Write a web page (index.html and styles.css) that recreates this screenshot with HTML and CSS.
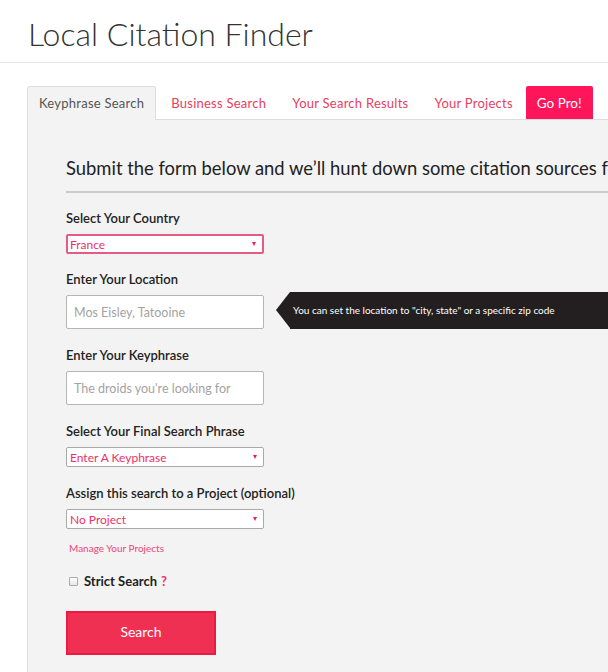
FILE: index.html
```html
<!DOCTYPE html>
<html lang="en">
<head>
<meta charset="utf-8">
<title>Local Citation Finder</title>
<link rel="stylesheet" href="styles.css">
</head>
<body>
<header class="top">
  <h1 class="title">Local Citation Finder</h1>
</header>
<nav class="tabs">
  <a class="tab tab-active">Keyphrase Search</a>
  <a class="tab tab-second">Business Search</a>
  <a class="tab">Your Search Results</a>
  <a class="tab">Your Projects</a>
  <a class="tab tab-pro">Go Pro!</a>
  <span class="tabs-fill"></span>
</nav>
<section class="panel">
  <h2 class="intro">Submit the form below and we’ll hunt down some citation sources for you</h2>
  <form class="form">
    <label class="label first">Select Your Country</label>
    <div class="select select-focus"><span>France</span><span class="caret"></span></div>

    <label class="label">Enter Your Location</label>
    <div class="row">
      <div class="input"><span class="ph">Mos Eisley, Tatooine</span></div>
      <div class="tip">You can set the location to "city, state" or a specific zip code</div>
    </div>

    <label class="label gap17">Enter Your Keyphrase</label>
    <div class="input"><span class="ph">The droids you're looking for</span></div>

    <label class="label gap17">Select Your Final Search Phrase</label>
    <div class="select"><span>Enter A Keyphrase</span><span class="caret"></span></div>

    <label class="label gap17">Assign this search to a Project (optional)</label>
    <div class="select"><span>No Project</span><span class="caret"></span></div>

    <a class="manage">Manage Your Projects</a>

    <div class="check-row">
      <span class="checkbox"></span>
      <span class="check-label">Strict Search</span>
      <span class="help">?</span>
    </div>

    <button type="button" class="btn">Search</button>
  </form>
</section>
</body>
</html>
```

FILE: styles.css
```css
* { box-sizing: border-box; }
html, body { margin: 0; padding: 0; }
body {
  background: #fff;
  font-family: Lato, "Open Sans", sans-serif;
  color: #222;
  width: 608px;
  height: 672px;
  overflow: hidden;
}
.top {
  height: 63px;
  border-bottom: 1px solid #e6e6e6;
  padding-left: 28px;
}
.title {
  margin: 0;
  padding-top: 14px;
  font-size: 32px;
  line-height: 40px;
  font-weight: 300;
  color: #333;
}
.tabs {
  display: flex;
  align-items: stretch;
  margin-top: 23px;
  padding-left: 27px;
  height: 34px;
}
.tab {
  display: flex;
  align-items: center;
  padding: 0 13px;
  font-size: 13px;
  letter-spacing: 0.25px;
  color: #e8405e;
  border-bottom: 1px solid #ddd;
  white-space: nowrap;
}
.tab-second { padding-left: 15px; }
.tab-active {
  background: #f3f3f3;
  color: #555;
  border: 1px solid #ddd;
  border-bottom: 1px solid #f3f3f3;
  border-radius: 3px 3px 0 0;
  padding: 0 11px 0 11px;
}
.tab-pro {
  background: #ff1559;
  color: #fff;
  letter-spacing: 0;
  border-radius: 2px 2px 0 0;
  padding: 0 11px;
  font-size: 13.5px;
}
.tabs-fill {
  flex: 1;
  border-bottom: 1px solid #ddd;
}
.panel {
  margin-left: 27px;
  background: #f3f3f3;
  border-left: 1px solid #ddd;
  padding: 36px 0 40px 38px;
  height: 560px;
  overflow: hidden;
}
.intro {
  margin: 0;
  font-size: 18.4px;
  line-height: 24px;
  font-weight: 400;
  color: #222;
  white-space: nowrap;
  padding-bottom: 11px;
  border-bottom: 2px solid #cccccc;
}
.form { display: block; }
.label {
  display: block;
  font-size: 13px;
  line-height: 18px;
  font-weight: 600;
  color: #222;
  margin-top: 16px;
  margin-bottom: 7px;
}
.label.gap17 { margin-top: 17px; }
.select {
  width: 198px;
  height: 20px;
  background: #fff;
  border: 1px solid #a9a9a9;
  border-radius: 2px;
  display: flex;
  align-items: center;
  justify-content: space-between;
  padding: 0 6px 0 3px;
  font-size: 12px;
  color: #ee2f6a;
}
.select-focus {
  border: 2px solid #e45c86;
  padding-left: 2px;
}
.caret {
  width: 0;
  height: 0;
  border-left: 2.5px solid transparent;
  border-right: 2.5px solid transparent;
  border-top: 4px solid #ee1f5f;
}
.row {
  display: flex;
  align-items: center;
  gap: 12px;
}
.input {
  width: 198px;
  height: 34px;
  background: #fff;
  border: 1px solid #b5b5b5;
  border-radius: 2px;
  display: flex;
  align-items: center;
  padding-left: 7px;
  font-size: 12.5px;
}
.ph { color: #a3a3a3; }
.tip {
  position: relative;
  flex: 1;
  height: 37px;
  margin-left: 14px;
  margin-top: -4px;
  background: #231f20;
  color: #fff;
  font-size: 10px;
  display: flex;
  align-items: center;
  padding-left: 3px;
  white-space: nowrap;
}
.tip::before {
  content: "";
  position: absolute;
  left: -14px;
  top: 0;
  border-top: 18.5px solid transparent;
  border-bottom: 18.5px solid transparent;
  border-right: 14px solid #231f20;
}
.manage {
  display: block;
  margin-top: 12px;
  font-size: 10px;
  line-height: 14px;
  color: #f0457a;
  padding-left: 3px;
}
.check-row {
  display: flex;
  align-items: center;
  height: 18px;
  margin-top: 17px;
  padding-left: 3px;
}
.checkbox {
  width: 9px;
  height: 9px;
  border: 1px solid #aaa;
  border-radius: 1px;
  background: linear-gradient(#fff, #e6e6e6);
  margin-right: 6px;
}
.check-label {
  font-size: 13px;
  font-weight: 700;
  color: #222;
}
.help {
  font-size: 13px;
  font-weight: 700;
  color: #f0306a;
  margin-left: 4px;
}
.btn {
  display: block;
  margin-top: 21px;
  width: 150px;
  height: 44px;
  background: #f03052;
  border: 2px solid #ea1a40;
  color: #fff;
  font-family: Lato, "Open Sans", sans-serif;
  font-size: 14px;
  line-height: 38px;
  padding: 0 0 2px 0;
  cursor: pointer;
}
```
